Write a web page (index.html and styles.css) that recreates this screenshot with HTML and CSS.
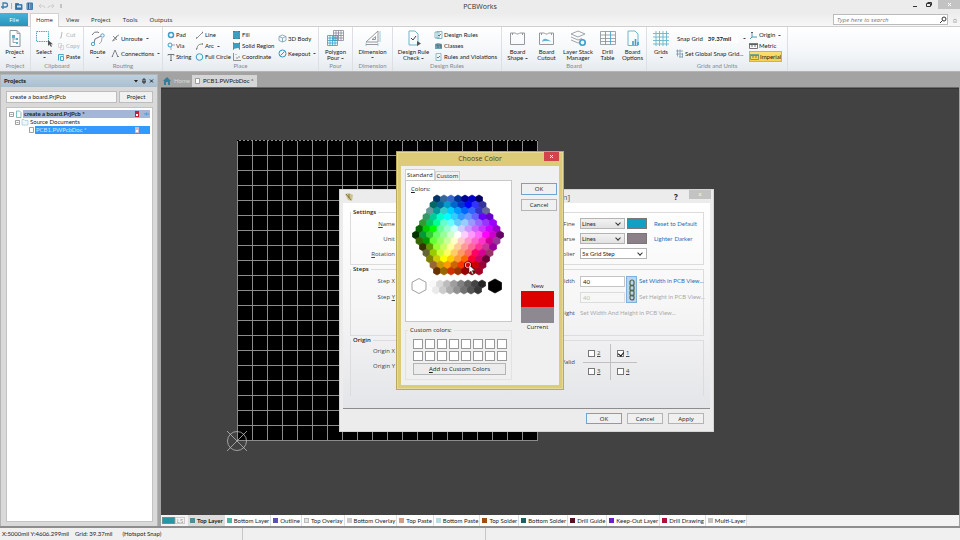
FILE: index.html
```
<!DOCTYPE html>
<html lang="en">
<head>
<meta charset="utf-8">
<title>PCBWorks</title>
<link rel="stylesheet" href="styles.css">
</head>
<body>
<header class="titlebar">
  <div class="quick">
    <svg width="62" height="12" viewBox="0 0 62 12" fill="none" stroke="#3f7fb0">
      <path d="M3 9V3h2.500a1.800 1.800 0 0 1 0 4H1" stroke-width="1.300"/><path d="M11.500 3v6" stroke="#999" stroke-width=".7"/>
      <path d="M15.500 9.500v-6h3l1 1H22v5z" fill="#2f6fa5"/><path d="M17 7.500h4v-2h-4z" fill="#cfe0ef" stroke="none"/>
      <path d="M27 3h5.500v6.500H27z" fill="#8ab0d4"/><path d="M28.500 3v6M31 3v6" stroke="#2f5f94"/>
      <path d="M39 6h4q2 0 2 2M39 6l2-2M39 6l2 2M54 6h-4q-2 0-2 2M54 6l-2-2M54 6l-2 2" stroke="#cdcdcd"/><path d="M61 4v4" stroke="#888" stroke-width=".8"/>
    </svg>
  </div>
  <h1>PCBWorks</h1>
  <div class="winbtns">
    <button aria-label="Minimize"><svg width="7" height="7"><path d="M2 5.500h4" stroke="#333"/></svg></button>
    <button aria-label="Restore"><svg width="7" height="7" fill="none" stroke="#333"><path d="M1.500 2.500h4v3h-4zM2.500 1.500h4v3"/></svg></button>
    <button class="close" aria-label="Close"><svg width="7" height="7"><path d="M2 2l3 3M5 2l-3 3" stroke="#fff"/></svg></button>
  </div>
</header>
<nav class="menubar">
  <a href="#" class="file">File</a><a href="#" class="on">Home</a><a href="#">View</a><a href="#">Project</a><a href="#">Tools</a><a href="#">Outputs</a>
  <div class="search">
    <input type="text" placeholder="Type here to search" aria-label="Search">
    <svg width="8" height="8" viewBox="0 0 8 8" fill="none" stroke="#333"><circle cx="5" cy="3" r="2"/><path d="M3.500 4.500L1 7"/></svg>
  </div>
  <svg class="collapse" width="8" height="8" fill="none" stroke="#999" stroke-width=".8"><path d="M2 4.500L4 3l2 1.500M2 6h4"/></svg>
</nav>

<section class="ribbon">
  <div class="group g-project">
    <div class="tools">
      <button class="big"><svg width="16" height="17" viewBox="0 0 16 17" fill="none" stroke="#8b949c"><path d="M3 .5h7l3 3v13H3z"/><path d="M10 .5v3h3M6 8v4.500h3M6 9h3" stroke-width=".8"/><path d="M5 5h3v3H5zM9 8h2v2H9zM9 12h2v2H9z" fill="#58b2cc" stroke="none"/></svg><span>Project</span><i></i></button>
    </div>
    <h2>Project</h2>
  </div>
  <div class="group g-clip">
    <div class="tools">
      <button class="big"><svg width="18" height="17" viewBox="0 0 18 17" fill="none"><path d="M1.500 1.500h12v10h-12z" stroke="#4aa8c4" stroke-dasharray="1.500 .8"/><path d="M13 10v6l1.500-1.500L16 17l1-.7-1.300-2H18z" fill="#555"/></svg><span>Select</span><i></i></button>
      <div class="stack three">
        <button class="dim"><svg width="8" height="8" stroke="#bbb" fill="none"><path d="M5 1L4 7M3 7h1"/></svg>Cut</button>
        <button class="dim"><svg width="8" height="8" stroke="#ccc" fill="none"><path d="M1.500 1.500h3v4h-3zM3.500 3.500h3v4h-3z" stroke-width=".7"/></svg>Copy</button>
        <button><svg width="8" height="8" stroke="#4aa8c4" fill="none"><path d="M1.500 7.500v-6h5v1M3.500 3.500h3v4h-3z"/></svg>Paste</button>
      </div>
    </div>
    <h2>Clipboard</h2>
  </div>
  <div class="group g-route">
    <div class="tools">
      <button class="big"><svg width="16" height="17" viewBox="0 0 16 17" fill="none" stroke="#777"><path d="M2 5q2-4 6-3l1 1M4 13l1-4 4-2 2-1"/><circle cx="3" cy="14" r="1.700" stroke="#4aa8c4"/><circle cx="12.500" cy="5.500" r="1.700" stroke="#4aa8c4"/><path d="M12 8q0 5-3 6" stroke="#aaa"/></svg><span>Route</span><i></i></button>
      <div class="stack two">
        <button><svg width="9" height="9" stroke="#777" fill="none"><path d="M1 7q3 0 4-3t3-3M2 2l4 4M6 2L2 6" stroke-width=".8"/></svg>Unroute<i></i></button>
        <button><svg width="9" height="9" stroke="#777" fill="none"><path d="M1 8L4 1l3 7M1 7.500h1M6 7.500h2" stroke-width=".9"/></svg>Connections<i></i></button>
      </div>
    </div>
    <h2>Routing</h2>
  </div>
  <div class="group g-place">
    <div class="tools">
      <div class="stack three c1">
        <button><svg width="8" height="8" fill="none" stroke="#3aa0c8"><circle cx="4" cy="4" r="2.500" stroke-width="1.500"/></svg>Pad</button>
        <button><svg width="8" height="8" fill="none" stroke="#3aa0c8"><circle cx="3" cy="3" r="2"/><path d="M4 5v3M5 3h3" stroke="#888" stroke-width=".7"/></svg>Via</button>
        <button><svg width="8" height="8" fill="none" stroke="#666"><path d="M1 2.500v-1h6v1M4 1.500V7M3 7.500h2" stroke-width=".9"/></svg>String</button>
      </div>
      <div class="stack three c2">
        <button><svg width="9" height="8" fill="none" stroke="#777"><path d="M2 7l5-5" stroke-width=".8"/><path d="M1 7h1M7 1.500h1" stroke-width="1.600"/></svg>Line</button>
        <button><svg width="9" height="8" fill="none" stroke="#777"><path d="M2 7q0-5 5-5" stroke-width=".8"/><path d="M1 7h1M7 2h1" stroke-width="1.600"/></svg>Arc<i></i></button>
        <button><svg width="9" height="8" fill="none" stroke="#3aa0c8"><circle cx="4.500" cy="4" r="3.300"/></svg>Full Circle</button>
      </div>
      <div class="stack three c3">
        <button><svg width="9" height="8"><path d="M1 0h7v8H1z" fill="#3b9fc4"/><path d="M1.500.5h1M6.500.5h1M1.500 7.500h1M6.500 7.500h1" stroke="#555"/></svg>Fill</button>
        <button><svg width="9" height="8"><path d="M1 1h7v6l-2-1-5 1z" fill="#3b9fc4"/><path d="M1 1h1M7 1h1M1 7h1M7 7h1" stroke="#555"/></svg>Solid Region</button>
        <button><svg width="9" height="8" fill="none" stroke="#777" stroke-width=".8"><path d="M1.500 0v7.500H9M4 1v1M4 5h2M7 3v2"/></svg>Coordinate</button>
      </div>
      <div class="stack two">
        <button><svg width="9" height="9" fill="none" stroke="#6d9fb4" stroke-width=".8"><path d="M1 2.500L4.500 1 8 2.500v4L4.500 8 1 6.500zM1 2.500L4.500 4 8 2.500M4.500 4v4"/></svg>3D Body</button>
        <button><svg width="9" height="9" fill="none" stroke="#2b9ac0"><circle cx="4.500" cy="4.500" r="3.500"/><path d="M2.500 6.500l4-4"/></svg>Keepout<i></i></button>
      </div>
    </div>
    <h2>Place</h2>
  </div>
  <div class="group g-pour">
    <div class="tools">
      <button class="big"><svg width="17" height="17" viewBox="0 0 17 17" fill="none" stroke-width=".8"><path d="M6.500.5h10v10h-10zM6.500 3h10M6.500 5.500h10M6.500 8h10M9 .5v10M11.500.5v10M14 .5v10" stroke="#889"/><path d="M.5 5.500h10v10H.5zM.5 8h10M.5 10.500h10M.5 13h10M3 5.500v10M5.500 5.500v10M8 5.500v10" stroke="#2fa3c4"/></svg><span>Polygon<br>Pour <b></b></span></button>
    </div>
    <h2>Pour</h2>
  </div>
  <div class="group g-dim">
    <div class="tools">
      <button class="big"><svg width="17" height="17" viewBox="0 0 17 17" fill="none" stroke="#8a8f94"><path d="M2 12L14 1v11zM8 9.500h3.500v-3zM2 14.500h12" stroke-width=".9"/><path d="M16 1v11M2 13v3M14 13v3" stroke="#6db7cd" stroke-width=".7"/></svg><span>Dimension</span><i></i></button>
    </div>
    <h2>Dimension</h2>
  </div>
  <div class="group g-rules">
    <div class="tools">
      <button class="big"><svg width="16" height="17" viewBox="0 0 16 17" fill="none" stroke="#8aa"><path d="M3 1h6l3 3v11H3z" stroke="#6db7cd"/><path d="M5 8l2 2 3-4" stroke="#445"/><path d="M11 11v5l4-2.500z" fill="#555" stroke="none"/></svg><span>Design Rule<br>Check <b></b></span></button>
      <div class="stack three">
        <button><svg width="9" height="8" fill="none" stroke="#67a9bd" stroke-width=".8"><path d="M1 1h4v6H1zM3 .5h5v7H3z"/><path d="M4 4l1 1 2-2" stroke="#555"/></svg>Design Rules</button>
        <button><svg width="9" height="8"><path d="M1 2l3-1 4 1v5H1z" fill="#6ea2b3"/><path d="M2 3h2v3M5 3h2v3" stroke="#456" stroke-width=".7" fill="none"/></svg>Classes</button>
        <button><svg width="9" height="8" fill="none" stroke="#79aebf" stroke-width=".8"><path d="M2 .5h5v7H2z"/><path d="M3 4l1 1 2-2" stroke="#555"/></svg>Rules and Violations</button>
      </div>
    </div>
    <h2>Design Rules</h2>
  </div>
  <div class="group g-board">
    <div class="tools">
      <button class="big"><svg width="17" height="17" viewBox="0 0 17 17" fill="none" stroke="#8a8f94"><path d="M1.500 14.500V3h2v2M3.500 3h3l1 1h2l1-1h3v2M13.500 3h2v11.500h-14" stroke-width=".9"/></svg><span>Board<br>Shape <b></b></span></button>
      <button class="big"><svg width="17" height="17" viewBox="0 0 17 17" fill="none" stroke="#8a8f94"><path d="M1.500 14.500V3h2v2M3.500 3h3l1 1h2l1-1h3v2M13.500 3h2v11.500h-14" stroke-width=".9"/><path d="M4 12q1-4 4.500-3T13 12l-2-1H6z" fill="#64b5d2" stroke="none"/></svg><span>Board<br>Cutout</span></button>
      <button class="big wide"><svg width="17" height="17" viewBox="0 0 17 17" fill="none" stroke="#8a8f94" stroke-width=".8"><path d="M1 4l7-3 7 3-7 3zM1 7l7 3 4-1.500M1 10l7 3 2-.6"/><circle cx="12.500" cy="12.500" r="2.700" stroke="#3a9fc8" stroke-width="1.600"/></svg><span>Layer Stack<br>Manager</span></button>
      <button class="big slim"><svg width="16" height="17" viewBox="0 0 16 17" fill="none" stroke="#8a8f94" stroke-width=".8"><path d="M.5 1.500h15v13H.5zM.5 5h15M.5 8.500h15M.5 11.500h15"/><path d="M5.500 1.500v13M10.500 1.500v13" stroke="#3a9fc8"/></svg><span>Drill<br>Table</span></button>
      <button class="big slim"><svg width="16" height="17" viewBox="0 0 16 17" fill="none" stroke="#6db7cd"><path d="M3 1h7l3 3v11.500H3z"/><path d="M8 15v-4M10.500 15V9M13 15v-3" stroke="#3a9fc8" stroke-width="1.600"/></svg><span>Board<br>Options</span></button>
    </div>
    <h2>Board</h2>
  </div>
  <div class="group g-grids">
    <div class="tools">
      <button class="big"><svg width="16" height="17" viewBox="0 0 16 17" stroke="#69b4cb" stroke-width=".9"><path d="M3 1v15M6.500 1v15M10 1v15M13.500 1v15M0 3.500h16M0 7h16M0 10.500h16M0 14h16"/></svg><span>Grids</span><i></i></button>
      <div class="stack two">
        <div class="snap"><label for="snap">Snap Grid</label><input id="snap" value="39.37mil"><i></i></div>
        <button><svg width="9" height="9" fill="none" stroke="#7a98a5" stroke-width=".8"><path d="M1 2h7M1 5h7M2.500.5v7M5 .5v8M7.500 4v4.500M4 8h4"/></svg>Set Global Snap Grid...</button>
      </div>
      <div class="stack three units">
        <button><svg width="9" height="8" fill="none" stroke="#3a8fb0" stroke-width=".9"><path d="M3 1v5h5M3 6L1 8"/><path d="M2 2l1-1 1 1" stroke="#555"/></svg>Origin<i></i></button>
        <button><svg width="9" height="8"><path d="M.5 2.500h8v4h-8z" fill="none" stroke="#777"/><path d="M0 2h9" stroke="#555" stroke-width="1.500"/><path d="M3 3v2M6 3v2" stroke="#777"/></svg>Metric</button>
        <button class="active"><svg width="9" height="8"><path d="M.5 2.500h8v4h-8z" fill="none" stroke="#8a9c50"/><path d="M0 2h9" stroke="#4d9a8c" stroke-width="1.500"/><path d="M3 3v2M6 3v2" stroke="#777"/></svg>Imperial</button>
      </div>
    </div>
    <h2>Grids and Units</h2>
  </div>
</section>

<main>
  <aside class="panel">
    <header><h2>Projects</h2>
      <svg width="22" height="8" viewBox="0 0 22 8" fill="none" stroke="#222"><path d="M1 3h4L3 5.500z" fill="#222" stroke="none"/><path d="M9 5h4M10 2v3M12 2v3M10 2h2M11 5v2" stroke-width=".9"/><path d="M17 2.500l3 3M20 2.500l-3 3"/></svg>
    </header>
    <div class="panelbody">
      <div class="picker"><input value="create a board.PrjPcb" aria-label="Project name"><button>Project</button></div>
      <ul class="tree">
        <li class="root"><svg width="14" height="8" fill="none" stroke="#777" stroke-width=".7"><path d="M.5 2.500h4v4h-4zM1.500 4.500h2"/><path d="M7.500 1h3l1.500 1.500v5H7.500z" stroke="#4aa"/></svg><span class="label">create a board.PrjPcb *<svg width="16" height="6"><path d="M1 0h4v6H1z" fill="#c0203a"/><path d="M2 3h2v2H2z" fill="#fff"/><path d="M10 3h5M12.500 1.500v3" stroke="#4f9fcf"/></svg></span></li>
        <li class="folder"><svg width="14" height="8" fill="none" stroke="#777" stroke-width=".7"><path d="M.5 2.500h4v4h-4zM1.500 4.500h2"/><path d="M7 7V1.500h2l1 1h3V7z" stroke="#9cc6dc" fill="#eef7fb"/></svg><span class="label">Source Documents</span></li>
        <li class="doc"><svg width="7" height="8" fill="#fff" stroke="#777" stroke-width=".7"><path d="M1.500 1.500h4v5h-4z"/></svg><span class="label">PCB1.PWPcbDoc *<svg width="16" height="6"><path d="M1 0h4v6H1z" fill="#d8b6cc"/><path d="M2 3h2v2H2z" fill="#fff"/></svg></span></li>
      </ul>
    </div>
  </aside>

  <section class="workspace">
    <div class="doctabs">
      <a href="#" class="home"><svg width="8" height="8"><path d="M0 4l4-4 4 4H7v4H5V5H3v3H1V4z" fill="#357d9b"/></svg>Home</a>
      <a href="#" class="doc"><svg width="5" height="6" fill="#fff" stroke="#888" stroke-width=".8"><path d="M.5.5h4v5h-4z"/></svg>PCB1.PWPcbDoc *</a>
    </div>
    <div class="canvas">
      <div class="board"></div>
      <svg class="origin" width="22" height="22" viewBox="0 0 22 22" fill="none" stroke="#b8b8b8" stroke-width=".8"><circle cx="11" cy="11" r="9.500"/><path d="M1 1l20 20M21 1L1 21"/></svg>
    </div>
    <div class="layers">
      <span class="current"></span><button class="ls">LS</button>
      <a href="#" class="on"><i class="l1"></i>Top Layer</a><a href="#"><i class="l2"></i>Bottom Layer</a><a href="#"><i class="l3"></i>Outline</a><a href="#"><i class="l4"></i>Top Overlay</a><a href="#"><i class="l5"></i>Bottom Overlay</a><a href="#"><i class="l6"></i>Top Paste</a><a href="#"><i class="l7"></i>Bottom Paste</a><a href="#"><i class="l8"></i>Top Solder</a><a href="#"><i class="l9"></i>Bottom Solder</a><a href="#"><i class="l10"></i>Drill Guide</a><a href="#"><i class="l11"></i>Keep-Out Layer</a><a href="#"><i class="l12"></i>Drill Drawing</a><a href="#"><i class="l13"></i>Multi-Layer</a>
    </div>
  </section>
</main>
<footer class="status">
  <div class="cell"><span>X:5000mil Y:4606.299mil</span><span>Grid: 39.37mil</span><span class="snapinfo">(Hotspot Snap)</span></div>
  <div class="cell"></div><div class="cell last"></div>
</footer>

<div class="dialog grid-editor" role="dialog" aria-label="Grid Editor">
  <header>
    <svg width="10" height="10"><path d="M1 2l4-1 4 2-1 6-4-1z" fill="#cfc391"/><path d="M2 2l5 6M5 2v4" stroke="#6f6536" stroke-width=".8"/></svg>
    <h2>[mm]</h2><button class="help">?</button><button class="close" aria-label="Close">x</button>
  </header>
  <div class="form">
    <fieldset class="settings"><legend>Settings</legend>
      <label for="name"><u>N</u>ame</label><div class="mid"><input id="name"><label for="fine">Fine</label></div>
      <div class="ctl"><span class="pick"><select id="fine"><option>Lines</option></select></span><span class="sw teal"></span><a href="#">Reset to Default</a></div>
      <label for="unit">Unit</label><div class="mid"><input id="unit"><label for="coarse">Coarse</label></div>
      <div class="ctl"><span class="pick"><select id="coarse"><option>Lines</option></select></span><span class="sw gray"></span><a href="#">Lighter</a><a href="#" class="next">Darker</a></div>
      <label for="rot"><u>R</u>otation</label><div class="mid"><input id="rot"><label for="mult">Multiplier</label></div>
      <div class="ctl"><span class="pick long"><select id="mult"><option>5x Grid Step</option></select></span></div>
    </fieldset>
    <fieldset class="steps"><legend>Steps</legend>
      <label for="sx">Step X</label><div class="mid"><input id="sx"><label for="w">Width</label></div>
      <div class="ctl"><input id="w" value="40"><a href="#">Set Width in PCB View...</a></div>
      <label for="sy">Step <u>Y</u></label><div class="mid"><input id="sy"></div>
      <div class="ctl"><input value="40" disabled aria-label="Height"><a class="off">Set Height in PCB View...</a></div>
      <span></span><div class="mid"><span></span><span>Height</span></div>
      <div class="ctl"><a class="off both">Set Width And Height in PCB View...</a></div>
      <button class="chain" aria-label="Link width and height"><svg width="8" height="22" fill="none" stroke="#4d6346" stroke-width="1.200"><rect x="2" y="1" width="4" height="6" rx="2"/><rect x="2" y="6" width="4" height="6" rx="2"/><rect x="2" y="11" width="4" height="6" rx="2"/><rect x="2" y="16" width="4" height="5" rx="2"/></svg></button>
    </fieldset>
    <fieldset class="orig"><legend>Origin</legend>
      <div class="olabels"><label for="ox">Origin X</label><label for="oy">Origin Y</label></div>
      <div class="mid"><div class="pair"><input id="ox"><input id="oy"></div><span>Valid</span></div>
      <div class="quads">
        <label><input type="checkbox"><u>2</u></label><label><input type="checkbox" checked><u>1</u></label>
        <label><input type="checkbox"><u>3</u></label><label><input type="checkbox"><u>4</u></label>
      </div>
    </fieldset>
  </div>
  <footer><button class="default">OK</button><button>Cancel</button><button>Apply</button></footer>
</div>

<div class="dialog color" role="dialog" aria-label="Choose Color">
  <header><h2>Choose Color</h2><button class="close" aria-label="Close"><svg width="7" height="7"><path d="M2 2l3 3M5 2l-3 3" stroke="#fff"/></svg></button></header>
  <div class="cbody">
    <div class="left">
      <div class="tabs"><button class="on">Standard</button><button>Custom</button></div>
      <div class="palette"><span><u>C</u>olors:</span><svg id="hexes" width="105" height="110" viewBox="0 0 105 110"></svg></div>
      <fieldset><legend>Custom colors:</legend>
        <div class="customs" id="customs"></div>
        <button><u>A</u>dd to Custom Colors</button>
      </fieldset>
    </div>
    <div class="right">
      <button class="default">OK</button><button>Cancel</button>
      <div class="compare"><span>New</span><i class="new"></i><i class="cur"></i><span>Current</span></div>
    </div>
  </div>
</div>
<script src="palette.js"></script>
</body>
</html>
```
FILE: styles.css
```
* { box-sizing: border-box; }
html, body { height: 100%; }
body { margin: 0; display: flex; flex-direction: column; font: 6px/8px "Open Sans", "Liberation Sans", sans-serif; color: #222; background: #f0f0f0; overflow: hidden; }
button, input, select { font: inherit; color: inherit; margin: 0; padding: 0; border: 0; background: none; border-radius: 0; }
h1, h2 { margin: 0; font-size: inherit; font-weight: 400; }
a { color: inherit; text-decoration: none; }
svg { display: block; flex: none; }
fieldset { margin: 0; padding: 0; min-width: 0; border: 1px solid #dcdcdc; }
legend { padding: 0 2px; }

.titlebar { height: 13px; flex: none; display: grid; grid-template-columns: 1fr auto 1fr; background: #ececec; }
.titlebar h1 { font-size: 7px; line-height: 13px; color: #333; }
.winbtns { display: flex; justify-content: flex-end; gap: 5px; align-items: flex-start; }
.winbtns button { padding: 1px; }
.winbtns .close { background: #c3c3c3; width: 22px; height: 9px; display: flex; justify-content: center; }

.menubar { height: 14px; flex: none; display: flex; align-items: stretch; background: linear-gradient(#ececec, #f7f7f7); border-bottom: 1px solid #cfcfcf; }
.menubar a { line-height: 14px; padding: 0 6px; }
.menubar .file { width: 28px; text-align: center; padding: 0; color: #fff; background: linear-gradient(#45b4d8, #2a92bb); }
.menubar .on { background: #fff; border: 1px solid #d2d2d2; border-bottom: 0; margin: 0 1px 0 2px; padding: 0 5px; height: 14px; line-height: 12px; }
.search { margin-left: auto; width: 115px; height: 11px; margin-top: 1px; display: flex; align-items: center; border: 1px solid #bbb; background: #fff; }
.search input { flex: 1; min-width: 0; padding-left: 3px; font-style: italic; }
.search input::placeholder { color: #777; }
.collapse { margin: 3px 1px 0 3px; }

.ribbon, .panel, .doctabs, .layers, .status, .ctl { font-family: Lato, "Open Sans", sans-serif; }
.ribbon { height: 45px; flex: none; display: flex; background: linear-gradient(#fff, #f3f6f9 60%, #e6eaee); border-bottom: 1px solid #b4b4b4; }
.group { display: flex; flex-direction: column; border-right: 1px solid #dcdfe3; flex: none; }
.tools { display: flex; height: 35px; padding-top: 3px; }
.group h2 { text-align: center; color: #858a90; }
.group button { white-space: nowrap; }
.big { display: flex; flex-direction: column; align-items: center; line-height: 6px; width: 29px; flex: none; }
.big svg { margin-bottom: 2px; }
.big.wide { width: 34px; }
.big.slim { width: 25px; }
.ribbon i, .ribbon b { display: inline-block; border: 1px solid transparent; border-top-color: #444; border-bottom: 0; width: 3px; height: 1px; }
.big i { margin-top: 2px; }
.big b { vertical-align: 1px; }
.stack { display: flex; flex-direction: column; align-items: flex-start; }
.stack button { display: flex; align-items: center; gap: 1px; }
.three button { height: 11px; }
.two { padding-top: 1px; }
.two button, .snap { height: 15px; }
.stack i { margin-left: 2px; }
.dim { color: #b4b4b4; }
.g-project { width: 31px; }
.g-clip { width: 53px; }
.g-clip .big { width: 26px; }
.g-route { width: 79px; }
.g-route .big { width: 27px; }
.g-place { width: 156px; }
.g-place .tools { padding-left: 4px; }
.c1 { width: 28px; }
.c2 { width: 37px; }
.c3 { width: 46px; }
.g-pour { width: 34px; }
.g-pour .big { width: 33px; }
.g-dim { width: 40px; }
.g-dim .big { width: 39px; }
.g-rules { width: 109px; }
.g-rules .big { width: 41px; }
.g-board { width: 145px; }
.g-board .tools { padding-left: 1px; }
.g-grids { width: 141px; }
.g-grids .big { width: 28px; }
.snap { display: flex; align-items: center; gap: 3px; padding-left: 2px; }
.snap input { width: 32px; height: 9px; padding-left: 2px; background: #fff; font-weight: 700; }
.units { margin-left: auto; margin-right: 5px; }
.units button { width: 33px; }
.units .active { background: linear-gradient(#fbe07a, #f4cf4a); outline: 1px solid #d9b23e; outline-offset: -1px; padding-left: 1px; }

main { flex: 1; display: flex; min-height: 0; background: #a3a3a3; border-bottom: 2px solid #8e8e8e; }
.panel { width: 158px; flex: none; display: flex; flex-direction: column; background: #d9d9d9; margin-top: 2px; border: 1px solid #b5b5b5; border-bottom: 0; }
.panel header { height: 12px; display: flex; align-items: center; justify-content: space-between; padding: 0 2px 0 3px; background: linear-gradient(#bdd0de, #a9bfd0); }
.panel h2 { font-weight: 900; }
.panelbody { flex: 1; display: flex; flex-direction: column; padding: 4px 4px 4px 5px; gap: 4px; }
.picker { display: flex; gap: 2px; height: 12px; }
.picker input { flex: 1; min-width: 0; background: #f7f7f7; border: 1px solid #bdbdbd; padding-left: 3px; }
.picker button { width: 34px; background: #f0f0f0; border: 1px solid #bdbdbd; }
.tree { flex: 1; margin: 0; padding: 2px; list-style: none; background: #fff; border: 1px solid #c3c3c3; }
.tree li { display: flex; height: 8px; }
.tree .label { flex: 1; display: flex; justify-content: space-between; align-items: center; padding-left: 1px; }
.tree .root .label { background: #a3b6d6; font-weight: 700; }
.tree .folder { padding-left: 6px; }
.tree .doc { padding-left: 19px; }
.tree .doc .label { background: #3399ff; color: #cfe6ff; }

.workspace { flex: 1; min-width: 0; margin-left: 3px; margin-right: 1px; display: flex; flex-direction: column; }
.doctabs { height: 16px; flex: none; display: flex; align-items: flex-end; border-bottom: 1px solid #6a6a6a; }
.doctabs a { display: flex; align-items: center; gap: 3px; height: 12px; }
.doctabs .home { color: #d9d9d9; padding: 0 2px; }
.doctabs .doc { background: #d6d6d6; padding: 0 3px; }
.canvas { flex: 1; position: relative; background: #424242; border-top: 1px solid #333; }
.board { position: absolute; left: 76px; top: 51px; width: 301px; height: 301px; background-color: #000; background-image: repeating-linear-gradient(90deg, #000 0 2px, transparent 2px 4px), linear-gradient(#8c8c8c 1px, transparent 1px), linear-gradient(90deg, #8c8c8c 1px, transparent 1px); background-size: 100% 1px, 15px 15px, 15px 15px; background-repeat: no-repeat, repeat, repeat; }
.origin { position: absolute; left: 65px; top: 341px; }
.layers { height: 11px; flex: none; display: flex; align-items: center; background: #f3f3f3; }
.current { width: 13px; height: 7px; background: #2596a8; margin-left: 1px; border: 1px solid #6e8f94; flex: none; }
.ls { width: 10px; height: 7px; line-height: 5px; color: #999; border: 1px solid #ccc; margin-right: 3px; flex: none; }
.layers a { display: flex; align-items: center; gap: 2px; height: 11px; padding: 0 1px 0 2px; border-right: 1px solid #ddd; white-space: nowrap; background: #fff; }
.layers a.on { font-weight: 700; background: #dcdcdc; }
.layers i { width: 5px; height: 5px; background: #4a8f92; }
.layers .l2 { background: #4db3a2; }
.layers .l3 { background: #5a4fb4; }
.layers .l4 { background: #e2e2e2; border: 1px solid #bbb; }
.layers .l5 { background: #c9c9c9; }
.layers .l6 { background: #d49c86; }
.layers .l7 { background: #b7dde0; }
.layers .l8 { background: #9b4f16; }
.layers .l9 { background: #1f5e62; }
.layers .l10 { background: #551222; }
.layers .l11 { background: #6a20c8; }
.layers .l12 { background: #a8123c; }
.layers .l13 { background: #c2c2c2; }
.status { height: 12px; flex: none; display: grid; grid-template-columns: 243px 243px 1fr; background: #f0f0f0; }
.cell { border-right: 1px solid #c6c6c6; padding-left: 2px; line-height: 12px; display: flex; gap: 6px; white-space: nowrap; }
.cell.last { border: 0; }
.snapinfo { padding-left: 4px; }

.dialog { position: absolute; display: flex; flex-direction: column; }
.dialog header { display: flex; align-items: center; flex: none; }
.dialog u { text-underline-offset: 1px; }
.default { outline: 1px solid #6fa4cc; outline-offset: -1px; }
.grid-editor { left: 339px; top: 189px; width: 375px; background: #ececec; border: 1px solid #d4d4d4; }
.grid-editor header { height: 13px; padding-left: 4px; }
.grid-editor h2 { flex: 1; text-align: right; font-size: 8px; padding-right: 102px; color: #555; }
.help { width: 8px; font-weight: 700; font-size: 8px; }
.grid-editor .close { width: 22px; height: 9px; margin: 0 2px 4px 9px; line-height: 7px; background: #c3c3c3; color: #fff; }
.form { margin: 0 3px; padding: 5px 6px 12px 7px; background: linear-gradient(#fff, #f6f6f7 50%, #e4e5e8); border-bottom: 1px solid #8c8c8c; color: #444; }
.form fieldset { display: grid; grid-template-columns: 44px 1fr 123px; position: relative; align-items: center; }
.form legend { color: #222; font-weight: 600; }
.form fieldset > label { text-align: right; }
.settings { grid-auto-rows: 15px; padding-bottom: 3px; }
.steps { grid-auto-rows: 16px; padding-bottom: 14px; }
.orig { padding-bottom: 15px; border-bottom-color: transparent; }
.mid { display: flex; justify-content: space-between; align-items: center; padding: 0 5px 0 8px; }
.mid input { width: 60px; height: 11px; border: 1px solid #bbb; background: #fff; }
.pair { display: grid; gap: 4px; }
.ctl { display: flex; align-items: center; white-space: nowrap; }
.ctl > input { width: 45px; height: 11px; border: 1px solid #c4c4c4; background: #fff; padding-left: 2px; margin-right: 14px; color: #222; }
.ctl > input:disabled { color: #bbb; background: #f7f7f7; border-color: #dcdcdc; }
.ctl a { color: #2a6cb8; }
.ctl a.next { margin-left: 2px; }
.ctl a.off { color: #aaa; }
.pick { position: relative; width: 45px; height: 11px; margin-right: 2px; background: linear-gradient(#f2f2f2, #e2e2e2); border: 1px solid #b4b4b4; }
.pick.long { width: 67px; background: #fff; }
.pick select { appearance: none; width: 100%; height: 9px; padding-left: 1px; color: #222; display: block; }
.pick::after { content: ""; position: absolute; right: 4px; top: 2px; width: 3px; height: 3px; border: solid #333; border-width: 0 1px 1px 0; transform: rotate(45deg); pointer-events: none; }
.sw { width: 20px; height: 11px; border: 1px solid #777; margin-right: 7px; }
.teal { background: #10a0c2; }
.gray { background: #8b8088; }
.chain { position: absolute; right: 66px; top: 3px; width: 11px; height: 27px; display: flex; align-items: center; justify-content: center; background: #b9d6ef; border: 1px solid #7fb0dc; }
.olabels { display: grid; grid-auto-rows: 15px; text-align: right; align-self: start; line-height: 15px; }
.quads { width: 54px; margin-left: 3px; display: grid; grid-template-columns: 1fr 1fr; grid-auto-rows: 18px; background: linear-gradient(#c0c0c0, #c0c0c0) 50% 0 / 1px 100% no-repeat, linear-gradient(#c0c0c0, #c0c0c0) 0 50% / 100% 1px no-repeat; }
.quads label { display: flex; align-items: center; gap: 2px; padding-left: 5px; }
.quads label:nth-child(even) { padding-left: 7px; }
.quads input { appearance: none; width: 7px; height: 7px; border: 1px solid #777; background: #fff; position: relative; }
.quads input:checked::after { content: ""; position: absolute; left: 1px; top: 0; width: 3px; height: 4px; border: solid #111; border-width: 0 1px 1px 0; transform: rotate(40deg); }
.grid-editor footer { display: flex; justify-content: flex-end; gap: 5px; padding: 4px 9px 7px; }
.grid-editor footer button { width: 36px; height: 11px; background: #f0f0f0; border: 1px solid #b4b4b4; }

.color { left: 396px; top: 151px; width: 168px; background: #dccb78; border: 1px solid #b9a95c; padding: 0 4px 4px; box-shadow: inset 0 0 0 1px #e6da9a; }
.color header { height: 14px; position: relative; justify-content: center; }
.color h2 { font-size: 7px; color: #4a4326; }
.color .close { position: absolute; right: 0; top: 0; width: 15px; height: 9px; background: #d0454b; display: flex; align-items: center; justify-content: center; }
.cbody { background: #f0f0f0; display: flex; gap: 9px; padding: 3px 3px 5px 4px; }
.left { width: 107px; flex: none; }
.tabs { display: flex; align-items: flex-end; height: 11px; }
.tabs button { height: 9px; line-height: 8px; padding: 0 1px; border: 1px solid #d0d0d0; border-bottom: 0; }
.tabs .on { background: #fff; height: 11px; padding: 0 1px; }
.palette { background: #fff; border: 1px solid #c8c8c8; height: 142px; padding-top: 4px; }
.palette span { padding-left: 5px; display: block; }
.left fieldset { margin-top: 4px; padding: 5px 0 4px 7px; border-color: #e2e2e2; }
.left legend { margin-left: -5px; }
.left fieldset button { width: 93px; height: 12px; margin-top: 2px; border: 1px solid #b4b4b4; background: #ececec; display: block; }
.customs { display: grid; grid-template-columns: repeat(8, 10px); gap: 2px; }
.customs i { height: 10px; background: #fff; border: 1px solid #999; }
.right { flex: 1; display: flex; flex-direction: column; gap: 4px; padding: 14px 0 0; }
.right button { width: 36px; height: 12px; border: 1px solid #b4b4b4; background: #f0f0f0; }
.compare { margin-top: 67px; width: 33px; text-align: center; }
.compare i { display: block; height: 16px; }
.compare .new { background: #dc0000; margin-top: 1px; }
.compare .cur { background: #8e8890; }
```
FILE: palette.js
```
const rows = [
  "003366 336699 3366CC 003399 000099 0000CC 000066",
  "006666 006699 0099CC 0066CC 0033CC 0000FF 3333FF 333399",
  "669999 009999 33CCCC 00CCFF 0099FF 0066FF 3366FF 3333CC 666699",
  "339966 00CC99 00FFCC 00FFFF 33CCFF 3399FF 6699FF 6666FF 6600FF 6600CC",
  "339933 00CC66 00FF99 66FFCC 66FFFF 66CCFF 99CCFF 9999FF 9966FF 9933FF 9900FF",
  "006600 00CC00 00FF00 66FF99 99FFCC CCFFFF CCCCFF CC99FF CC66FF CC33FF CC00FF 9900CC",
  "003300 009933 33CC33 66FF66 99FF99 CCFFCC FFFFFF FFCCFF FF99FF FF66FF FF00FF CC00CC 660066",
  "336600 009900 66FF33 99FF66 CCFF99 FFFFCC FFCCCC FF99CC FF66CC FF33CC CC0099 993399",
  "333300 669900 99FF33 CCFF66 FFFF99 FFCC99 FF9999 FF6699 FF3399 CC3399 990099",
  "666633 99CC00 CCFF33 FFFF66 FFCC66 FF9966 FF6666 FF0066 D60094 993366",
  "808000 CCCC00 FFFF00 FFCC00 FF9933 FF6600 FF0033 CC0066 660033",
  "996633 CC9900 FF9900 CC6600 FF3300 FF0000 CC0000 990033",
  "663300 996600 CC3300 993300 990000 800000 A50021"
].map(r => r.split(" "));

function hex(cx, cy, w, h, fill, stroke) {
  const x = w / 2, y = h / 2;
  const pts = [[0, -y], [x, -y / 2], [x, y / 2], [0, y], [-x, y / 2], [-x, -y / 2]]
    .map(p => (cx + p[0]) + "," + (cy + p[1])).join(" ");
  return `<polygon points="${pts}" fill="${fill}" stroke="${stroke || fill}" stroke-width="0.7"/>`;
}

let out = "";
rows.forEach((r, i) => r.forEach((c, j) => {
  out += hex(52 + (j - (r.length - 1) / 2) * 7, 6 + i * 6, 7, 8, "#" + c);
}));
for (let i = 0; i < 8; i++) {
  const a = 248 - i * 30, b = 234 - i * 30;
  out += hex(27 + i * 7, 91, 7, 8, `rgb(${a},${a},${a})`);
  if (i < 7) out += hex(30 + i * 7, 97, 7, 8, `rgb(${b},${b},${b})`);
}
out += hex(13, 93, 14, 15, "#fff", "#777") + hex(89, 93, 13, 14, "#000");
out += hex(62, 72, 7, 8, "none", "#300") + hex(62, 72, 5, 6, "#d00", "#fff");
out += '<path d="M63 72v8l2-2 1 3 1.500-.6-1.300-2.800H69z" fill="#fff" stroke="#333" stroke-width=".5"/>';
document.getElementById("hexes").innerHTML = out;
document.getElementById("customs").innerHTML = "<i></i>".repeat(16);
```
